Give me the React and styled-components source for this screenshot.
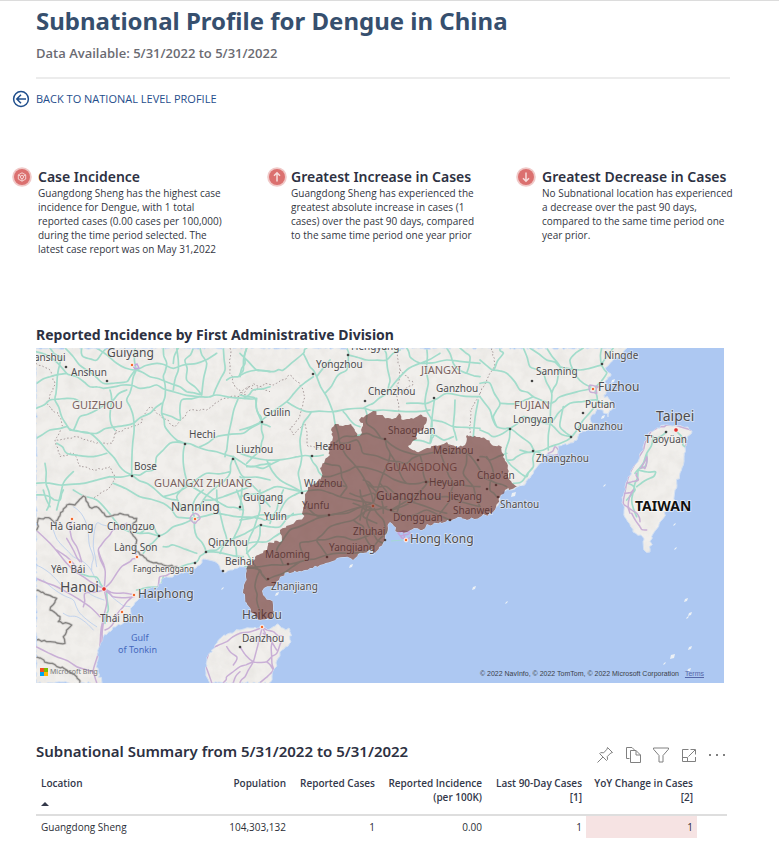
import React from "react";
import styled, { createGlobalStyle } from "styled-components";

const GlobalStyle = createGlobalStyle`
  * { box-sizing: border-box; }
  body {
    margin: 0;
    background: #fff;
    color: #33384a;
    font-family: "Noto Sans", "Open Sans", sans-serif;
  }
`;

/* ---------- page ---------- */

const Page = styled.main`
  border-top: 1px solid #dcdcdc;
  padding-bottom: 14px;
`;

const Header = styled.header`
  margin: 0 49px 0 36px;
  padding: 4px 0 14px;
  border-bottom: 2px solid #ececec;
`;

const Title = styled.h1`
  margin: 0;
  color: #364f6e;
  font-size: 24px;
  line-height: 32px;
  font-weight: 700;
`;

const Subtitle = styled.p`
  margin: 6px 0 0;
  color: #6b6b72;
  font-family: "Open Sans", sans-serif;
  font-size: 13px;
  line-height: 20px;
  font-weight: 600;
`;

const BackLink = styled.a`
  display: inline-flex;
  align-items: center;
  gap: 6px;
  margin: 10px 0 0 12px;
  color: #1f4e8c;
  font-family: "Open Sans", sans-serif;
  font-size: 11px;
  line-height: 20px;
  font-weight: 500;
  text-decoration: none;
`;

/* ---------- insight cards ---------- */

const Insights = styled.section`
  display: grid;
  grid-template-columns: 255fr 249fr 263fr;
  min-height: 158px;
  margin: 54px 0 0 12px;
`;

const Insight = styled.article`
  display: flex;
  align-items: flex-start;
  gap: ${(p) => p.$gap}px;
`;

const InsightBody = styled.div`
  max-width: 194px;
`;

const InsightTitle = styled.h2`
  margin: 0;
  color: #2d3142;
  font-size: 14px;
  line-height: 19px;
  font-weight: 600;
  white-space: nowrap;
`;

const InsightText = styled.p`
  margin: 0;
  color: #33363f;
  font-family: "Open Sans", sans-serif;
  font-size: 10px;
  line-height: 14px;
`;

const Badge = styled.svg`
  flex: none;
  width: 20px;
  height: 20px;
`;

/* ---------- map ---------- */

const MapSection = styled.section`
  margin: 0 55px 0 36px;
`;

const SectionTitle = styled.h2`
  margin: 0;
  color: #2d3142;
  font-size: ${(p) => (p.$large ? "15px" : "14px")};
  line-height: 20px;
  font-weight: ${(p) => (p.$large ? 600 : 700)};
`;

const MapFrame = styled.div`
  position: relative;
  margin-top: 3px;
  overflow: hidden;
`;

const MapSvg = styled.svg`
  display: block;
  width: 100%;
  height: auto;
  background: #adc8f2;
  font-family: "Noto Sans", "Open Sans", sans-serif;
`;

const BingMark = styled.div`
  position: absolute;
  left: 4px;
  bottom: 6px;
  display: flex;
  align-items: center;
  gap: 2px;
  color: #777;
  font-size: 7px;
  line-height: 10px;
`;

const Attribution = styled.div`
  position: absolute;
  right: 20px;
  bottom: 4px;
  display: flex;
  gap: 6px;
  color: #3b4048;
  font-family: "Liberation Sans", Arial, sans-serif;
  font-size: 7px;
  line-height: 10px;
`;

const TermsLink = styled.a`
  color: #5566a8;
`;

/* ---------- summary ---------- */

const Summary = styled.section`
  margin: 58px 52px 0 36px;
`;

const SummaryBar = styled.div`
  display: flex;
  justify-content: space-between;
  align-items: flex-start;
`;

const Toolbar = styled.div`
  display: flex;
  gap: 8px;
  padding-top: 4px;
`;

const ToolButton = styled.button`
  width: 20px;
  height: 20px;
  padding: 0;
  border: 0;
  background: none;
  color: #808080;
  svg { display: block; }
`;

const Table = styled.table`
  width: 100%;
  margin-top: 8px;
  border-collapse: collapse;
  table-layout: fixed;
  font-family: "Open Sans", sans-serif;
  font-size: 10px;
`;

const Col = styled.col`
  width: ${(p) => p.$width};
`;

const Th = styled.th`
  height: 42px;
  padding: ${(p) => (p.$align ? "3px 4px 0 5px" : "3px 4px 0 1px")};
  border-bottom: 2px solid #dedede;
  vertical-align: top;
  text-align: ${(p) => p.$align || "right"};
  color: #33384a;
  line-height: 14px;
  font-weight: 600;
`;

const SortButton = styled.button`
  display: flex;
  flex-direction: column;
  align-items: flex-start;
  gap: 12px;
  padding: 0;
  border: 0;
  background: none;
  color: inherit;
  font: inherit;
`;

const Td = styled.td`
  height: 23px;
  padding: 0 4px 0 5px;
  text-align: ${(p) => p.$align || "right"};
  background: ${(p) => (p.$alert ? "#f6e3e3" : "transparent")};
  color: #2b2e36;
  line-height: 18px;
`;

/* ---------- map geometry ----------
   Map units run from (36, 348) to (724, 683). Road sheets are surveyed at
   three times that scale from their own origin. */

const hash = (n) => {
  const s = Math.sin(n * 127.1) * 43758.5453;
  return s - Math.floor(s) - 0.5;
};

const pairs = (text) => {
  const n = text.trim().split(/[\s,]+/).map(Number);
  const out = [];
  for (let i = 0; i < n.length; i += 2) out.push([n[i], n[i + 1]]);
  return out;
};

const roughen = (pts, amp) => {
  const out = [];
  for (let i = 0; i < pts.length - 1; i++) {
    const [x1, y1] = pts[i];
    const [x2, y2] = pts[i + 1];
    const len = Math.hypot(x2 - x1, y2 - y1);
    const steps = Math.max(1, Math.round(len / 2.5));
    for (let s = 0; s < steps; s++) {
      const t = s / steps;
      const j = s === 0 ? 0 : amp;
      const seed = x1 + y1 * 3 + s * 7;
      out.push([
        x1 + (x2 - x1) * t + hash(seed) * j,
        y1 + (y2 - y1) * t + hash(seed + 5) * j,
      ]);
    }
  }
  out.push(pts[pts.length - 1]);
  return out;
};

const linePath = (pts) =>
  "M" + pts.map(([x, y]) => `${x.toFixed(1)} ${y.toFixed(1)}`).join("L");

const curvePath = (p) => {
  let d = `M${p[0][0].toFixed(1)} ${p[0][1].toFixed(1)}`;
  for (let i = 0; i < p.length - 1; i++) {
    const a = p[i - 1] || p[i];
    const b = p[i];
    const c = p[i + 1];
    const e = p[i + 2] || c;
    const v = [
      b[0] + (c[0] - a[0]) / 6, b[1] + (c[1] - a[1]) / 6,
      c[0] - (e[0] - b[0]) / 6, c[1] - (e[1] - b[1]) / 6,
      c[0], c[1],
    ].map((k) => k.toFixed(1));
    d += `C${v.join(" ")}`;
  }
  return d;
};

const sheetPath = ({ at, lines }, draw) =>
  lines
    .map((l) => draw(pairs(l).map(([x, y]) => [at[0] + x / 3, at[1] + y / 3])))
    .join("");

const wobble = (pts) => curvePath(
  pts.flatMap((p, i) => {
    const q = pts[i + 1];
    if (!q) return [p];
    const s = p[0] * 2 + p[1];
    return [p, [(p[0] + q[0]) / 2 + hash(s) * 3, (p[1] + q[1]) / 2 + hash(s + 3) * 3]];
  })
);

const southCoast =
  "496,507 493,512 480,517 470,519 458,517 450,521 440,522 432,525 427,524 422,530 414,528 407,532 397,532 394,526 390,522 388,528 387,533 385,540 383,543 379,547 375,553 371,549 363,553 358,554 353,560 345,557 337,558 330,562 320,565 310,568 297,572 288,572 280,577 276,583 272,586 264,588 262,591 265,597 270,600 273,605 274,612 272,618 260,620 253,613 247,603 243,593 244,585 246,577 247,567";

const mainland =
  "36,348 627,348 620,355 613,360 605,368 611,374 605,381 607,388 604,395 609,399 613,407 608,417 603,410 597,409 590,419 596,426 590,430 580,433 577,440 570,443 558,446 557,457 549,454 543,459 537,467 530,478 526,483 517,487 511,490 503,492 500,500 " +
  southCoast +
  " 245,567 238,568 230,570 224,573 217,563 209,560 203,559 200,565 196,568 186,571 177,575 163,578 158,587 150,588 143,591 138,600 132,607 131,614 127,620 113,627 103,637 100,645 98,653 96,667 102,683 36,683 36,348";

const guangdong =
  "303,518 303,510 305,500 308,487 315,484 322,476 320,468 325,460 330,455 328,447 333,437 331,430 335,424 343,426 351,424 355,430 357,436 362,433 363,423 359,420 366,415 373,411 380,415 388,418 395,418 400,414 403,420 411,418 422,415 427,420 424,428 417,433 417,439 408,446 417,452 428,448 437,446 447,442 456,447 465,445 467,435 473,437 480,437 487,440 492,445 502,447 503,457 507,463 508,473 512,483 517,487 505,490 500,497 " +
  southCoast +
  " 253,565 255,557 263,553 267,550 268,543 282,541 280,530 290,525 303,518";

const hainan =
  "210,683 206,673 207,657 217,643 224,635 230,633 240,630 250,628 262,627 270,629 277,624 283,628 290,630 291,642 282,650 277,660 275,668 272,677 269,683 210,683";

const taiwan =
  "657,428 667,425 677,426 688,427 692,431 687,437 685,447 684,460 680,473 675,490 673,503 667,511 660,522 655,531 652,537 650,552 645,551 644,540 641,535 633,532 628,522 624,513 622,503 625,487 628,477 637,463 643,447 648,435 657,428";

const greenRoads = [
  {
    at: [30, 320],
    lines: [
      "18,95 60,110 110,160 140,170 180,200 220,205",
      "105,84 130,110 170,150 220,190 290,185 315,150",
      "18,265 60,240 110,235 150,245",
      "60,84 90,110 85,150 80,200 75,240 95,290 120,330",
      "220,205 280,195 330,205 380,195 430,215 510,230 560,225 640,235 680,235",
      "315,84 318,150 305,200 290,240 310,290 308,370 305,465",
      "200,84 260,130 318,150 380,130 430,145 500,130 560,100",
      "318,150 360,170 420,190 470,215 515,225",
      "400,84 410,130 400,170 405,230 395,280 405,320 440,360 465,370",
      "440,84 445,150 430,210", "490,84 465,120 470,180 515,225",
      "510,84 530,130 515,225", "580,84 585,150 560,200 550,225",
      "650,84 640,150 625,170 590,180", "625,170 680,150 720,155",
      "240,210 245,240 240,290 255,330",
      "130,330 200,340 260,320 310,310 360,280 395,250",
      "120,330 180,340 230,390 270,440 305,465",
      "18,355 60,330 110,320 130,330 150,290 200,270 250,240 290,210",
      "395,280 450,300 455,240 510,230", "625,235 605,300 590,390 585,410",
      "465,370 500,380 560,395 610,410", "465,370 460,430 470,490 440,530 460,570",
      "465,370 420,370 380,410 370,450 330,465 305,465 240,470",
      "80,370 110,400 180,410 230,400", "18,490 90,495 160,490 240,470",
      "305,465 350,490 400,530 440,540", "510,380 560,350 640,340 690,310",
      "680,235 685,280 695,310 720,320", "610,410 660,440 720,430",
      "610,410 600,460 560,500 520,540 500,570", "45,430 48,490 60,540 50,570",
      "130,455 100,490 80,570", "610,410 640,470 720,480",
      "400,530 470,500 530,460 600,455", "470,490 520,520 590,560 640,570",
      "155,84 160,110 200,120 230,84", "20,190 60,170 110,160", "430,130 445,84",
      "520,540 580,530 660,500", "640,235 670,210 720,200", "640,470 630,570",
    ],
  },
  {
    at: [240, 340],
    lines: [
      "0,40 50,90 100,95 130,90 190,40 200,24", "20,24 15,70 0,110",
      "190,40 210,80 230,110 260,170 280,220 285,250",
      "220,110 180,140 140,185 60,245", "140,185 200,215 280,215 370,205 430,210 520,215 570,210",
      "320,24 325,45 320,90 290,110 255,160", "430,24 440,60 450,120 440,160 400,190 370,205",
      "325,45 380,60 440,60 480,30", "65,245 70,290 60,330 20,370",
      "65,245 0,270", "0,165 45,175 65,245", "215,215 190,250 180,300 185,350 175,400 185,455",
      "0,340 80,360 175,350 210,348 250,345", "20,380 70,385 120,360",
      "185,455 110,440 60,460 0,470", "185,455 140,480 110,540",
      "80,360 120,420 185,455", "0,410 60,460 90,500", "210,348 230,380 250,410",
      "440,160 500,90 540,70 600,40", "560,24 560,80 565,130 555,190 575,240 570,310",
      "540,70 620,60 720,70", "500,190 560,190 620,160 720,170",
      "575,240 640,260 720,265", "583,180 573,280 610,300 640,290",
      "645,180 640,260 650,300", "715,180 700,290", "620,24 640,70 680,100 720,110",
      "500,24 510,50 540,70", "270,60 230,110", "310,215 330,240 360,260",
      "520,300 570,310 580,290", "660,24 690,50 680,100",
      "285,250 300,310 340,370 380,430 400,490", "375,205 380,250 420,290 435,298 450,340 430,400 400,490",
      "435,298 480,330 540,345 600,335 680,340 720,390", "260,330 310,290 380,280 430,298",
      "250,410 300,400 350,380 430,400 500,430 560,425 640,430 720,440",
      "185,455 240,450 300,470 400,490", "540,345 550,400 560,430 520,470 453,510",
      "200,500 240,530 320,520 400,490", "400,490 453,510 530,480 620,470 720,500",
      "300,310 350,300 370,340 440,360 500,370 540,345", "255,370 300,380 320,440 300,470",
      "370,420 400,440 440,440 480,470 470,520", "360,450 370,490 360,540",
      "380,430 420,470 430,520", "340,490 380,510 440,500", "450,340 480,400 500,430",
      "600,335 620,390 640,430 630,480 600,520", "680,340 670,400 700,440 720,500",
      "330,460 360,470 400,460 430,480", "420,430 450,470 500,480 560,500 620,520",
      "220,430 270,430 320,440",
    ],
  },
  {
    at: [480, 340],
    lines: [
      "0,60 40,90 70,40 60,24", "40,90 80,100 120,150 160,170 210,190 240,170 340,145",
      "130,24 150,80 190,100 215,160 210,250 205,330",
      "200,24 240,80 230,130 215,160", "150,24 200,60 240,80 300,90 365,75",
      "365,24 365,75 380,100 345,145 350,190 310,240 270,295 210,320 165,335",
      "0,130 30,130 60,190 40,230 50,260", "0,170 30,210 50,260 90,265 150,310 165,335",
      "90,265 130,230 210,250 270,190 350,180 385,190", "90,265 40,290 0,270",
      "165,335 110,350 80,360", "165,335 160,380 130,420 100,430",
      "80,360 110,390 140,410 160,380", "250,200 240,260 275,290", "310,24 270,60 290,110 340,145",
      "60,190 110,190 160,170", "400,24 380,50 365,75", "90,265 80,320 80,360",
      "120,330 165,335 190,345", "0,410 50,430 80,440", "20,350 40,400 30,450 50,470",
      "210,250 240,280 275,290", "0,350 30,360 80,340",
      "520,290 500,340 475,390 465,430 455,480 470,530", "500,340 495,380 465,400",
      "475,390 525,395 520,410 470,440", "560,275 520,300", "590,275 610,300 615,320",
      "445,430 465,450 440,480",
    ],
  },
  {
    at: [30, 490],
    lines: [
      "18,15 60,20 90,30 100,0", "40,0 60,50", "130,0 200,30 270,110 330,130 388,137 430,110 495,85",
      "495,85 440,80 400,40 330,20 250,-20", "495,85 500,140 527,185 500,215 440,235",
      "388,137 350,170 340,190", "495,85 560,70 620,80 690,85 720,90", "495,85 490,40 520,0",
      "527,185 560,180 600,150 690,105", "560,0 570,70 590,150 570,190", "620,0 640,60 610,150 620,200",
      "690,105 680,160 650,190", "527,185 580,190 640,200", "222,296 200,262 150,250",
      "230,300 235,360 225,400", "320,300 390,290 400,260", "400,170 430,165 500,190",
      "388,137 370,110 330,130",
    ],
  },
  {
    at: [240, 490],
    lines: [
      "60,0 60,60 40,120 20,180 40,220 80,270", "0,90 60,75 130,80 200,70", "130,0 110,60 90,100",
      "20,160 80,155 120,130", "60,105 120,110 160,70", "15,230 60,230 130,225 200,210 260,195 340,190 400,170 440,130",
      "200,70 270,75 330,60 400,50", "130,225 110,180 150,120 200,100 270,75", "80,270 60,240 20,235",
      "60,240 45,290 50,330 70,380", "260,195 230,150 270,110 340,90 400,50", "80,270 130,250 180,215",
      "400,50 430,90 440,130", "340,90 370,110 380,150 400,170", "230,150 290,140 340,150 400,130",
      "200,210 180,160 230,150", "400,50 380,90 400,130 430,160", "360,20 380,50 370,80 410,100",
      "450,155 500,150", "450,60 500,80 560,60 630,90",
    ],
  },
];

const purpleRoads = [
  {
    at: [30, 490],
    lines: [
      "18,120 60,160 110,220 160,260 222,296", "127,90 120,120 140,170 155,215",
      "222,296 225,240 205,180 225,150 250,120 290,100", "222,296 260,250 300,215 323,203 315,170",
      "222,296 260,310 313,315", "222,300 250,320 313,320", "313,315 280,350 250,400 225,420",
      "222,296 230,340 220,400 215,460 190,540 200,578", "18,265 80,290 150,330 210,380",
      "18,470 80,500 140,530 190,545", "80,180 130,220 150,245", "110,145 130,180 150,215",
      "160,350 165,310 222,300", "205,180 215,210 225,240", "222,380 212,430 205,500", "385,290 390,260 420,250",
      "495,70 480,85 495,100 510,85 495,70",
    ],
  },
  {
    at: [240, 490],
    lines: [
      "67,412 55,460 40,515 15,560 0,578", "67,412 95,450 95,500 100,540 60,578",
      "67,412 0,430 -40,455 -90,480 -105,520 -85,578", "0,470 40,515 80,515 110,490 130,440 100,425 67,412",
      "40,515 0,530 -40,560 -50,578", "-40,470 -10,500 -20,525", "0,545 -20,578", "80,515 100,540",
      "70,430 110,480",
    ],
  },
  {
    at: [480, 340],
    lines: [
      "530,265 505,290 490,330 460,380 440,430 430,490 450,520", "535,260 560,255 600,260 650,275 620,320 615,290",
      "440,430 475,420 470,400", "435,460 460,450 445,500 470,520 480,545", "485,380 500,350 495,385 480,385",
      "205,340 225,320 240,340 205,345", "330,135 355,140 350,160 330,155 330,135", "455,520 480,560 500,570",
    ],
  },
];

const provinces = [
  {
    at: [30, 320],
    lines: [
      "18,130 60,150 75,190 50,250 90,290 100,320 75,360 90,410 130,400 150,440 200,450 240,440 255,480 230,510 190,535",
      "255,340 330,310 360,260 395,290 435,320 480,270 530,270 570,240 600,230 650,225",
      "600,84 600,150 615,200 640,220 670,190 720,215", "80,360 140,350 200,370 245,370 260,330",
    ],
  },
  {
    at: [240, 340],
    lines: [
      "0,160 20,140 50,150 75,130 100,135 150,105 180,130 195,170 180,230 150,270 160,285 195,250 205,320 250,320",
      "470,24 480,90 470,150 480,225", "480,90 520,130 480,160", "720,160 690,210 690,280",
    ],
  },
  { at: [480, 340], lines: ["0,160 25,110 45,70 35,24"] },
];

const frontiers = {
  at: [30, 490],
  lines: [
    "20,120 25,85 60,85 75,100 110,45 135,45 160,18 185,55 200,50 230,80 270,70 320,85 300,120 320,150 315,180 360,215 400,225 440,230",
    "18,300 55,315 80,325 60,360 90,380 85,395 125,405 100,440 105,460 50,455 18,450",
    "18,500 60,520 110,540 140,560 150,578",
  ],
};

const rivers = {
  at: [30, 490],
  lines: [
    "70,120 100,170 130,200 180,235 222,296", "130,50 160,80 175,130 190,200 185,240", "18,225 60,250 100,290 160,300 222,330",
    "40,270 90,310 130,330 150,370 200,410", "222,296 270,340 300,350", "240,110 200,100 190,170 200,230",
    "100,370 140,380 190,420",
  ],
};

const islets = [
  [521, 483, 3], [473, 587, 3], [472, 592, 1], [506, 602, 2], [604, 485, 2], [674, 524, 2], [675, 548, 2], [685, 599, 3],
  [689, 613, 3], [687, 617, 2], [689, 647, 3], [671, 655, 4], [664, 663, 2], [688, 669, 3], [276, 593, 3],
  [350, 565, 3], [222, 588, 2], [612, 380, 3], [602, 416, 3], [512, 493, 4],
];

/* text, x, baseline, kind */
const places = [
  ["anshui", 34, 361], ["Guiyang", 107, 357, "big"], ["Anshun", 71, 376], ["Hechi", 189, 438], ["Bose", 134, 470],
  ["Liuzhou", 236, 453], ["Nanning", 171, 511, "big"], ["Guigang", 243, 501], ["Yongzhou", 316, 368],
  ["Hengyang", 351, 350], ["Chenzhou", 368, 395], ["Ganzhou", 436, 392], ["Guilin", 263, 416], ["Hezhou", 315, 450],
  ["Shaoguan", 388, 434], ["Meizhou", 433, 454], ["Wuzhou", 304, 487], ["Heyuan", 429, 486],
  ["Guangzhou", 376, 500, "big"], ["Jieyang", 448, 500], ["Yunfu", 302, 509], ["Dongguan", 393, 521],
  ["Shanwei", 453, 514], ["Zhuhai", 353, 535], ["Yangjiang", 329, 551], ["Maoming", 265, 558],
  ["Zhanjiang", 271, 590], ["Haikou", 242, 619, "mid"], ["Danzhou", 242, 642], ["Hong Kong", 410, 543, "big"],
  ["Yulin", 264, 520], ["Qinzhou", 208, 546], ["Beihai", 225, 565], ["Fangchenggang", 133, 572, "tiny"],
  ["Hà Giang", 50, 530], ["Chongzuo", 107, 530], ["Làng Son", 114, 551], ["Yên Bái", 51, 573],
  ["Hanoi", 60, 592, "capital"], ["Haiphong", 138, 598, "big"], ["Thái Bình", 100, 622], ["Ningde", 604, 359],
  ["Sanming", 536, 375], ["Fuzhou", 598, 391, "big"], ["Putian", 585, 408], ["Longyan", 513, 423],
  ["Quanzhou", 574, 430], ["Zhangzhou", 536, 462], ["Chao'an", 477, 479], ["Taipei", 656, 421, "capital"],
  ["T'aoyüan", 645, 443], ["Shantou", 500, 508], ["GUIZHOU", 72, 409, "province"],
  ["GUANGXI ZHUANG", 154, 487, "province"], ["JIANGXI", 421, 374, "province"], ["FUJIAN", 514, 409, "province"],
  ["GUANGDONG", 385, 471, "province"],
];

const sizes = { big: 12, mid: 12, tiny: 8, capital: 14, province: 11 };

const towns = pairs(
  "66,367 107,381 185,444 132,476 233,459 262,422 348,355 313,374 365,401 434,398 385,439 312,456 302,493 240,507 261,525 159,536 206,552 223,571 195,563 240,647 426,482 391,510 329,515 450,520 385,540 327,557 288,564 268,579 478,460 487,489 496,485 498,497 532,381 602,364 583,413 510,429 571,437 533,451 666,432"
);
const cities = pairs("132,365 195,519 72,519 70,562 137,557 134,595 122,612 262,627 373,506 406,540 593,389");
const capitals = pairs("104,589 676,430");

function ProvinceMap() {
  const land = [mainland, hainan, taiwan].map((s) => linePath(roughen(pairs(s), 2.8)) + "Z").join("");
  const shade = linePath(roughen(pairs(guangdong), 2.8)) + "Z";
  return (
    <MapSvg viewBox="36 348 688 335" role="img" aria-label="Map of reported incidence">
      <defs>
        <clipPath id="land"><path d={land} /></clipPath>
        <filter id="relief" x="0" y="0" width="100%" height="100%">
          <feTurbulence type="fractalNoise" baseFrequency="0.09" numOctaves="3" seed="4" />
          <feColorMatrix values="0 0 0 0 .6  0 0 0 0 .58  0 0 0 0 .54  0 0 0 1.2 -.45" />
        </filter>
      </defs>
      <path d={land} fill="#f1efec" stroke="#d5e2f4" strokeWidth="1" />
      <g clipPath="url(#land)" fill="none" strokeLinejoin="round" strokeLinecap="round">
        <rect x="36" y="348" width="688" height="335" filter="url(#relief)" opacity="0.3" />
        <path d={sheetPath(rivers, wobble)} stroke="#b5cbee" strokeWidth="0.8" />
        {provinces.map((s, i) => (
          <path key={i} d={sheetPath(s, (p) => linePath(roughen(p, 2)))} stroke="#a89c9c" strokeWidth="1" strokeDasharray="1.6 2" strokeLinecap="butt" />
        ))}
        {greenRoads.map((s, i) => <path key={i} d={sheetPath(s, wobble)} stroke="#a2dccb" strokeWidth="1.7" />)}
        {purpleRoads.map((s, i) => <path key={i} d={sheetPath(s, wobble)} stroke="#c9afd6" strokeWidth="1.5" />)}
        <path d={sheetPath(frontiers, (p) => linePath(roughen(p, 2)))} stroke="#d6d4d2" strokeWidth="3" />
        <path d={sheetPath(frontiers, (p) => linePath(roughen(p, 2)))} stroke="#858381" strokeWidth="1.3" />
      </g>
      <g fill="none" stroke="#c3a5dc" strokeWidth="1.4">
        <path d="M398 533l5-2 6 1 3 4-4 3-6-1zM400 536l9-2M403 531l2 8M133 366l4-2 2 4-4 1z" />
        <path d="M391 541l12-1" stroke="#a2dccb" strokeWidth="0.8" />
      </g>
      {islets.map(([x, y, s]) => (
        <path key={`${x}-${y}`} d={`M${x} ${y}l${s} -1l-1 ${s}l-${s} 1z`} fill="#edf1f5" />
      ))}
      {towns.map(([x, y]) => <circle key={`${x}-${y}`} cx={x} cy={y} r="1.3" fill="#444" />)}
      {cities.map(([x, y]) => <circle key={`${x}-${y}`} cx={x} cy={y} r="1.9" fill="#f26a2e" stroke="#fff" strokeWidth="1" />)}
      {capitals.map(([x, y]) => <circle key={`${x}-${y}`} cx={x} cy={y} r="2.3" fill="#e0302a" stroke="#fff" strokeWidth="0.8" />)}
      <g fill="#4d4c4e" stroke="#f6f5f3" strokeOpacity="0.6" strokeWidth="1.6" paintOrder="stroke">
        {places.map(([name, x, y, kind]) => (
          <text key={name} x={x} y={y} fontSize={sizes[kind] || 10} fill={kind === "province" ? "#7a625e" : undefined}>
            {name}
          </text>
        ))}
      </g>
      <g fill="#4668bd" fontSize="9">
        <text x="131" y="641">Gulf</text>
        <text x="118" y="653">of Tonkin</text>
      </g>
      <path d={shade} fill="rgb(106,50,47)" fillOpacity="0.64" />
      <text x="635" y="511" fontSize="14" fontWeight="700" fill="#111" stroke="#fff" strokeWidth="1.6" strokeOpacity="0.7" paintOrder="stroke">TAIWAN</text>
    </MapSvg>
  );
}

/* ---------- icons ---------- */

const BackIcon = () => (
  <svg width="18" height="18" viewBox="0 0 18 18" fill="none" stroke="#1f4e8c" strokeWidth="1.5" aria-hidden="true">
    <circle cx="9" cy="9" r="7.4" />
    <path d="M14 9H5M9 4.8L4.8 9L9 13.2" />
  </svg>
);

const glyphs = {
  virus: (
    <g strokeWidth="0.9">
      <path d="M10 5.8L13.7 7.9V12.1L10 14.2L6.3 12.1V7.9Z" />
      <circle cx="10" cy="10" r="1.6" />
      <path d="M6.3 7.9L8.6 9.2M13.7 7.9L11.4 9.2M10 14.2V11.6" />
    </g>
  ),
  up: <path d="M10 14.5V6M7 8.8L10 5.8L13 8.8" strokeWidth="1.5" />,
  down: <path d="M10 5.5V14M7 11.2L10 14.2L13 11.2" strokeWidth="1.5" />,
};

const BadgeIcon = ({ kind }) => (
  <Badge viewBox="0 0 20 20" fill="none" stroke="#f7dcdb" aria-hidden="true">
    <circle cx="10" cy="10" r="9.8" fill="#f0c9c8" stroke="none" />
    <circle cx="10" cy="10" r="8" fill="#db706f" stroke="none" />
    {glyphs[kind]}
  </Badge>
);

const tools = [
  ["Pin visual", <path d="M12.5 2.5L17.5 7.5L15.8 8L12.3 11.5L12.5 14.5L11.5 15.5L4.7 8.7L5.7 7.6L8.7 7.8L12 4.2ZM8 12L2.5 17.5" />],
  ["Copy visual", <path d="M6.5 13.5H3.5V2.5H9L11.5 5M7.5 5.5H13L17.5 10V17.5H7.5ZM13 5.5V10H17.5" />],
  ["Filters", <path d="M2.5 3H17.5V4.2L12 10.5V17H8V10.5L2.5 4.2Z" />],
  ["Focus mode", <path d="M9.5 4.5H3.5V16.5H16.5V12M3.5 12.5H8.5V16.5M9.5 11.5L16 5M11.5 4.5H16.5V9.5" />],
  ["More options", <path d="M2 10h2M9 10h2M16 10h2" strokeWidth="2" />],
];

/* ---------- content ---------- */

const insights = [
  ["virus", 6, "Case Incidence", "Guangdong Sheng has the highest case incidence for Dengue, with 1 total reported cases (0.00 cases per 100,000) during the time period selected. The latest case report was on May 31,2022"],
  ["up", 4, "Greatest Increase in Cases", "Guangdong Sheng has experienced the greatest absolute increase in cases (1 cases) over the past 90 days, compared to the same time period one year prior"],
  ["down", 6, "Greatest Decrease in Cases", "No Subnational location has experienced a decrease over the past 90 days, compared to the same time period one year prior."],
];

const columns = [
  ["Population", "98px"],
  ["Reported Cases", "89px"],
  ["Reported Incidence (per 100K)", "107px"],
  ["Last 90-Day Cases [1]", "100px"],
  ["YoY Change in Cases [2]", "111px"],
];

export default function App() {
  return (
    <Page>
      <GlobalStyle />
      <Header>
        <Title>Subnational Profile for Dengue in China</Title>
        <Subtitle>Data Available: 5/31/2022 to 5/31/2022</Subtitle>
      </Header>
      <BackLink href="#national"><BackIcon />BACK TO NATIONAL LEVEL PROFILE</BackLink>

      <Insights>
        {insights.map(([kind, gap, title, text]) => (
          <Insight key={kind} $gap={gap}>
            <BadgeIcon kind={kind} />
            <InsightBody>
              <InsightTitle>{title}</InsightTitle>
              <InsightText>{text}</InsightText>
            </InsightBody>
          </Insight>
        ))}
      </Insights>

      <MapSection>
        <SectionTitle>Reported Incidence by First Administrative Division</SectionTitle>
        <MapFrame>
          <ProvinceMap />
          <BingMark>
            <svg width="8" height="8" viewBox="0 0 8 8" aria-hidden="true">
              <path d="M0 0h4v4H0z" fill="#f25022" />
              <path d="M4 0h4v4H4z" fill="#7fba00" />
              <path d="M0 4h4v4H0z" fill="#00a4ef" />
              <path d="M4 4h4v4H4z" fill="#ffb900" />
            </svg>
            Microsoft Bing
          </BingMark>
          <Attribution>
            <span>© 2022 NavInfo, © 2022 TomTom, © 2022 Microsoft Corporation</span>
            <TermsLink href="#terms">Terms</TermsLink>
          </Attribution>
        </MapFrame>
      </MapSection>

      <Summary>
        <SummaryBar>
          <SectionTitle $large>Subnational Summary from 5/31/2022 to 5/31/2022</SectionTitle>
          <Toolbar>
            {tools.map(([label, icon]) => (
              <ToolButton key={label} type="button" aria-label={label}>
                <svg width="20" height="20" viewBox="0 0 20 20" fill="none" stroke="currentColor" strokeWidth="1">{icon}</svg>
              </ToolButton>
            ))}
          </Toolbar>
        </SummaryBar>
        <Table>
          <colgroup>
            <Col $width="auto" />
            {columns.map(([name, width]) => <Col key={name} $width={width} />)}
            <Col $width="30px" />
          </colgroup>
          <thead>
            <tr>
              <Th $align="left" scope="col" aria-sort="ascending">
                <SortButton type="button">
                  Location
                  <svg width="8" height="4" viewBox="0 0 8 4" aria-hidden="true"><path d="M0 4L4 0L8 4Z" fill="#33384a" /></svg>
                </SortButton>
              </Th>
              {columns.map(([name]) => <Th key={name} scope="col">{name}</Th>)}
              <Th as="td" />
            </tr>
          </thead>
          <tbody>
            <tr>
              <Td $align="left">Guangdong Sheng</Td>
              <Td>104,303,132</Td>
              <Td>1</Td>
              <Td>0.00</Td>
              <Td>1</Td>
              <Td $alert>1</Td>
              <Td />
            </tr>
          </tbody>
        </Table>
      </Summary>
    </Page>
  );
}
